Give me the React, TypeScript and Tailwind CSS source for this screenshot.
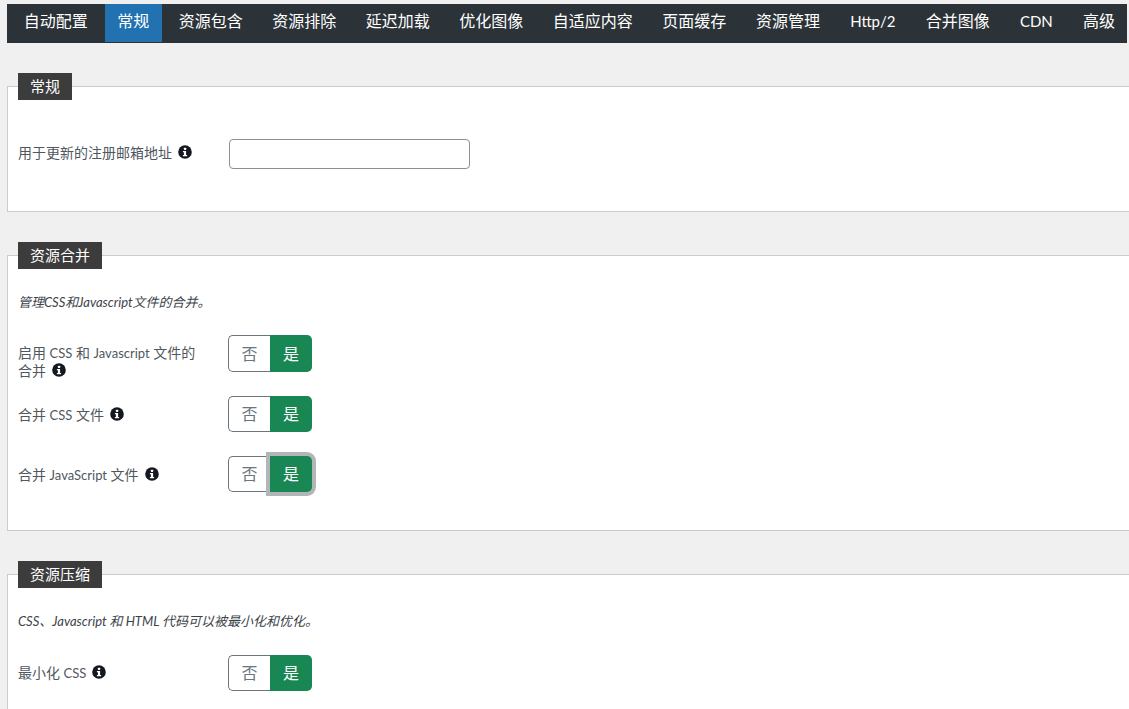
const TABS = ['自动配置', '常规', '资源包含', '资源排除', '延迟加载', '优化图像', '自适应内容', '页面缓存', '资源管理', 'Http/2', '合并图像', 'CDN', '高级']

const LATIN_TABS = ['Http/2', 'CDN']

const FONT = "font-['Lato','Noto_Sans_CJK_SC',sans-serif]"

function InfoIcon() {
  return (
    <svg viewBox="0 0 14 14" className="ml-[6px] inline-block h-[14px] w-[14px] align-[-1px]">
      <circle cx="7" cy="7" r="6.8" fill="#14181f" />
      <rect x="5.9" y="2.7" width="2.3" height="2.2" rx="0.6" fill="#fff" />
      <path d="M4.9 6h3.2v3.9h1v1.3H4.9V9.9h1V7.3h-1z" fill="#fff" />
    </svg>
  )
}

function Toggle({ focused = false, height = 'h-[37px]' }: { focused?: boolean; height?: string }) {
  return (
    <div className={`flex w-[84px] shrink-0 ${height}`}>
      <div className="flex w-[42px] items-center justify-center rounded-l-[5px] border border-r-0 border-[#6c757d] bg-white text-[16px] text-[#6c757d]">否</div>
      <div
        className={`flex w-[42px] items-center justify-center rounded-r-[5px] bg-[#198754] text-[16px] text-white ${
          focused ? 'shadow-[0_0_0_4px_#b3b6b9]' : ''
        }`}
      >
        是
      </div>
    </div>
  )
}

function Legend({ title, wide = false }: { title: string; wide?: boolean }) {
  return (
    <div className={`ml-[10px] -mt-[14px] flex h-[27px] items-center justify-center bg-[#3c3c3c] text-[15px] text-white ${wide ? 'w-[84px]' : 'w-[54px]'}`}>
      {title}
    </div>
  )
}

function Latin({ children }: { children: React.ReactNode }) {
  return <span className="text-[13px]">{children}</span>
}

function Row({ className, labelClass = '', children, toggle }: { className: string; labelClass?: string; children: React.ReactNode; toggle: React.ReactNode }) {
  return (
    <div className={`flex items-center ${className}`}>
      <div className={`w-[210px] shrink-0 pr-[14px] text-[14px] leading-[18px] text-[#50575e] ${labelClass}`}>{children}</div>
      {toggle}
    </div>
  )
}

export default function App() {
  return (
    <div className={`h-[709px] w-[1129px] overflow-hidden bg-[#f0f0f1] pt-[4px] ${FONT}`}>
      <nav className="ml-[7px] flex h-[39px] w-[1120px] gap-[4px] bg-[#2c3338] pl-[4px] pb-[1px]">
        {TABS.map(tab => (
          <div
            key={tab}
            className={`flex shrink-0 items-center whitespace-nowrap pb-[4px] text-white ${LATIN_TABS.includes(tab) ? 'px-[13.5px] text-[15px]' : 'px-[12.75px] text-[16px]'} ${tab === '常规' ? 'bg-[#2271b1]' : ''}`}
          >
            {tab}
          </div>
        ))}
      </nav>

      <section className="ml-[7px] mt-[43px] h-[126px] w-[1140px] border border-[#ccc] bg-white">
        <Legend title="常规" />
        <div className="ml-[10px] mt-[39px] flex items-center">
          <div className="w-[211px] shrink-0 pb-[3px] text-[14px] text-[#50575e]">
            用于更新的注册邮箱地址
            <InfoIcon />
          </div>
          <div className="h-[30px] w-[241px] rounded-[4px] border border-[#8c8f94] bg-white" />
        </div>
      </section>

      <section className="ml-[7px] mt-[43px] h-[276px] w-[1140px] border border-[#ccc] bg-white">
        <Legend title="资源合并" wide />
        <p className="ml-[10px] mt-[24px] text-[13px] leading-[18px] text-[#3c434a] italic">管理CSS和Javascript文件的合并。</p>
        <div className="ml-[10px] mt-[24px]">
          <Row className="h-[37px]" labelClass="pt-[16px]" toggle={<Toggle />}>
            启用 <Latin>CSS</Latin> 和 <Latin>Javascript</Latin> 文件的
            <br />
            合并
            <InfoIcon />
          </Row>
          <Row className="mt-[23px] h-[37px]" labelClass="pt-[2px]" toggle={<Toggle height="h-[36px]" />}>
            合并 <Latin>CSS</Latin> 文件
            <InfoIcon />
          </Row>
          <Row className="mt-[23px] h-[37px]" labelClass="pt-[2px]" toggle={<Toggle focused height="h-[36px]" />}>
            合并 <Latin>JavaScript</Latin> 文件
            <InfoIcon />
          </Row>
        </div>
      </section>

      <section className="ml-[7px] mt-[43px] h-[200px] w-[1140px] border border-[#ccc] bg-white">
        <Legend title="资源压缩" wide />
        <p className="ml-[10px] mt-[24px] text-[13px] leading-[18px] text-[#3c434a] italic">CSS、Javascript 和 HTML 代码可以被最小化和优化。</p>
        <div className="ml-[10px] mt-[24px]">
          <Row className="h-[37px]" toggle={<Toggle height="h-[36px]" />}>
            最小化 <Latin>CSS</Latin>
            <InfoIcon />
          </Row>
        </div>
      </section>
    </div>
  )
}
